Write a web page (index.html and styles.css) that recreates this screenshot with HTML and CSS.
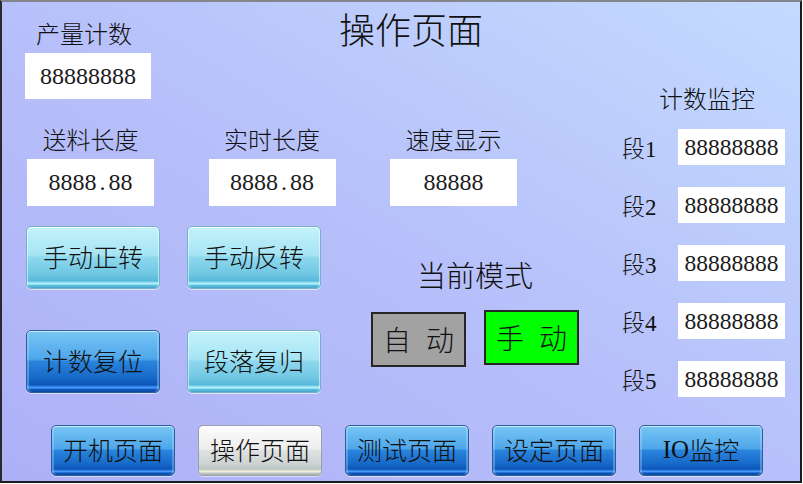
FILE: index.html
```html
<!DOCTYPE html>
<html lang="zh">
<head>
<meta charset="utf-8">
<title>操作页面</title>
<link rel="stylesheet" href="styles.css">
</head>
<body>
<div class="screen">
  <div class="main">
    <div class="left">
      <div class="top-row">
        <div class="count">
          <div class="label">产量计数</div>
          <div class="box num">88888888</div>
        </div>
        <div class="title">操作页面</div>
      </div>
      <div class="fields">
        <div class="field">
          <div class="label">送料长度</div>
          <div class="box num">8888<span class="dot">.</span>88</div>
        </div>
        <div class="field">
          <div class="label">实时长度</div>
          <div class="box num">8888<span class="dot">.</span>88</div>
        </div>
        <div class="field">
          <div class="label">速度显示</div>
          <div class="box num">88888</div>
        </div>
      </div>
      <div class="controls">
        <div class="btn-grid">
          <div class="btn gloss-cyan">手动正转</div>
          <div class="btn gloss-cyan">手动反转</div>
          <div class="btn gloss-blue">计数复位</div>
          <div class="btn gloss-cyan">段落复归</div>
        </div>
        <div class="mode">
          <div class="mode-title">当前模式</div>
          <div class="mode-boxes">
            <div class="mode-box auto">自 动</div>
            <div class="mode-box manual">手 动</div>
          </div>
        </div>
      </div>
    </div>
    <div class="monitor">
      <div class="monitor-title">计数监控</div>
      <div class="seg-list">
        <div class="seg"><div class="seg-label num">段1</div><div class="seg-box num">88888888</div></div>
        <div class="seg"><div class="seg-label num">段2</div><div class="seg-box num">88888888</div></div>
        <div class="seg"><div class="seg-label num">段3</div><div class="seg-box num">88888888</div></div>
        <div class="seg"><div class="seg-label num">段4</div><div class="seg-box num">88888888</div></div>
        <div class="seg"><div class="seg-label num">段5</div><div class="seg-box num">88888888</div></div>
      </div>
    </div>
  </div>
  <div class="nav">
    <div class="nav-btn gloss-blue">开机页面</div>
    <div class="nav-btn gloss-silver">操作页面</div>
    <div class="nav-btn gloss-blue">测试页面</div>
    <div class="nav-btn gloss-blue">设定页面</div>
    <div class="nav-btn gloss-blue"><span class="num">IO</span>监控</div>
  </div>
</div>
</body>
</html>
```
FILE: styles.css
```css
html, body {
  margin: 0;
  padding: 0;
  background: #ffffff;
}

body {
  font-family: "Noto Sans CJK SC", "Noto Sans", sans-serif;
  font-weight: 300;
  color: #111111;
}

.screen {
  width: 802px;
  height: 483px;
  box-sizing: border-box;
  border-style: solid;
  border-width: 2px;
  border-color: #85858c #1c1c1c #1c1c1c #2a2a2a;
  background: linear-gradient(to top right, #aeb0f7 0%, #b7c0fa 50%, #c3dbfe 100%);
  display: flex;
  flex-direction: column;
  overflow: hidden;
}

.num {
  font-family: "Liberation Serif", "Noto Sans CJK SC", serif;
}

.main {
  display: flex;
  height: 423px;
}

.left {
  width: 598px;
}

.top-row {
  display: flex;
  align-items: flex-start;
}

.label {
  font-size: 24px;
  line-height: 24px;
  height: 24px;
  white-space: nowrap;
}

.count {
  margin: 19px 0 0 23px;
  width: 126px;
}

.count .label {
  padding-left: 11px;
}

.box {
  background: #ffffff;
  display: flex;
  align-items: center;
  justify-content: center;
  font-size: 24px;
  color: #1a1a1a;
}

.count .box {
  margin-top: 8px;
  height: 46px;
}

.dot {
  padding: 0 3px;
}

.title {
  margin: 8px 0 0 188px;
  font-size: 36px;
  line-height: 36px;
  white-space: nowrap;
}

.fields {
  display: flex;
  gap: 54.5px;
  margin: 28px 0 0 25px;
}

.field {
  width: 127px;
}

.field .label {
  text-align: center;
}

.field .box {
  margin-top: 8px;
  height: 47px;
}

.controls {
  display: flex;
  margin: 20px 0 0 24px;
}

.btn-grid {
  display: grid;
  grid-template-columns: 134px 134px;
  grid-template-rows: 63px 63px;
  column-gap: 27px;
  row-gap: 41px;
}

.btn,
.nav-btn {
  box-sizing: border-box;
  display: flex;
  align-items: center;
  justify-content: center;
  font-size: 25px;
  line-height: 1;
  padding-bottom: 2px;
  border-radius: 5px;
  white-space: nowrap;
}

.gloss-cyan {
  border: 1px solid #6fb4cc;
  background: linear-gradient(to bottom,
    #c4f2fb 0%, #a6e4f4 46%, #8ed8ee 50%, #6ec6e2 78%, #58b8d8 88%,
    #b8f6ff 93%, #5cbcdc 96%, #44a6c8 100%);
  box-shadow: inset 0 1px 0 rgba(255,255,255,0.8), inset 1px 0 0 rgba(255,255,255,0.5), inset -1px 0 0 rgba(255,255,255,0.5), 0 1px 0 rgba(255,255,255,0.6);
}

.gloss-blue {
  border: 1px solid #2c5f9e;
  background: linear-gradient(to bottom,
    #78c6f4 0%, #4ea6ea 46%, #2a84dc 50%, #1668c8 78%, #0c56b8 88%,
    #4a9cff 93%, #0e58b8 96%, #0a48a0 100%);
  box-shadow: inset 0 1px 0 rgba(255,255,255,0.6), inset 2px 0 0 rgba(180,220,255,0.35), inset -2px 0 0 rgba(180,220,255,0.35), 0 1px 0 rgba(255,255,255,0.5);
}

.gloss-silver {
  border: 1px solid #9aa0a4;
  background: linear-gradient(to bottom,
    #fcfcfc 0%, #eeeeee 46%, #dfe2e2 50%, #ccd2d2 78%, #bcc4c4 88%,
    #f2f2dc 93%, #c4caca 96%, #a4acac 100%);
  box-shadow: inset 0 1px 0 rgba(255,255,255,0.9), 0 1px 0 rgba(255,255,255,0.5);
}

.mode {
  margin: 34px 0 0 50px;
  width: 208px;
  display: flex;
  flex-direction: column;
  align-items: center;
}

.mode-title {
  font-size: 29px;
  line-height: 29px;
  white-space: nowrap;
}

.mode-boxes {
  display: flex;
  gap: 18px;
  margin-top: 23px;
  align-items: flex-start;
}

.mode-box {
  box-sizing: border-box;
  width: 95px;
  height: 55px;
  border: 2px solid #262626;
  display: flex;
  align-items: center;
  justify-content: center;
  font-size: 28px;
  line-height: 1;
  padding-bottom: 2px;
  word-spacing: 9px;
  white-space: nowrap;
}

.mode-box.auto {
  background: #a2a2a2;
}

.mode-box.manual {
  background: #00ff00;
  margin-top: -2px;
}

.monitor {
  padding: 84px 0 0 22px;
}

.monitor-title {
  font-size: 24px;
  line-height: 24px;
  padding-left: 37px;
  white-space: nowrap;
}

.seg-list {
  display: flex;
  flex-direction: column;
  gap: 22px;
  margin-top: 19px;
}

.seg {
  display: flex;
  align-items: center;
  height: 36px;
}

.seg-label {
  width: 56px;
  font-size: 23px;
  white-space: nowrap;
}

.seg-box {
  width: 107px;
  height: 36px;
  background: #ffffff;
  display: flex;
  align-items: center;
  justify-content: center;
  font-size: 23.5px;
  color: #1a1a1a;
}

.nav {
  display: flex;
  gap: 23px;
  padding-left: 49px;
}

.nav-btn {
  width: 124px;
  height: 51px;
}
```
